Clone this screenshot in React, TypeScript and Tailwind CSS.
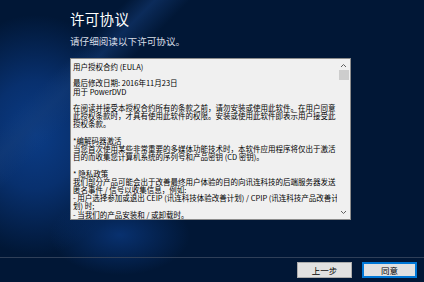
import React from "react";

const lines: string[] = [
  "用户授权合约 (EULA)",
  "",
  "最后修改日期: 2016年11月23日",
  "用于 PowerDVD",
  "",
  "在阅读并接受本授权合约所有的条款之前，请勿安装或使用此软件。在用户同意",
  "此授权条款时，才具有使用此软件的权限。安装或使用此软件即表示用户接受此",
  "授权条款。",
  "",
  "*编解码器激活",
  "当您首次使用某些非常重要的多媒体功能技术时，本软件应用程序将仅出于激活",
  "目的而收集您计算机系统的序列号和产品密钥 (CD 密钥)。",
  "",
  "* 隐私政策",
  "我们部分产品可能会出于改善最终用户体验的目的向讯连科技的后端服务器发送",
  "匿名事件 / 信号以收集信息，例如:",
  "- 用户选择参加或退出 CEIP (讯连科技体验改善计划) / CPIP (讯连科技产品改善计",
  "划) 时;",
  "- 当我们的产品安装和 / 或卸载时。",
];

export default function App() {
  return (
    <div
      className="relative w-[424px] h-[282px] overflow-hidden bg-[#011736] flex flex-col"
      style={{ fontFamily: '"Noto Sans CJK SC", "Noto Sans", sans-serif' }}
    >
      {/* background artwork */}
      <div className="absolute inset-0 pointer-events-none bg-[radial-gradient(ellipse_100px_120px_at_35px_135px,#0b3c86_0%,#08306e_45%,rgba(1,23,54,0)_100%)]" />
      <div className="absolute inset-0 pointer-events-none bg-[radial-gradient(ellipse_70px_40px_at_120px_235px,rgba(10,55,125,0.8)_0%,rgba(1,23,54,0)_100%)]" />
      <div className="absolute inset-0 pointer-events-none bg-[linear-gradient(135deg,rgba(1,23,54,0)_0%,rgba(1,23,54,0)_18%,rgba(20,60,120,0.55)_22%,rgba(1,23,54,0)_27%,rgba(1,23,54,0)_100%)]" />

      <div className="relative flex flex-col pl-[70px] pt-[10px]">
        <div className="text-white text-[14.5px] leading-[18px] tracking-[0.3px]">许可协议</div>
        <div className="text-[#d8dde6] text-[9.6px] leading-[12px] mt-[7px]">请仔细阅读以下许可协议。</div>

        <div className="mt-[11px] w-[281px] h-[162px] border border-[#8c8c8c] bg-[#f0f0f0] flex">
          <div className="flex-1 pl-[2px] pt-[4px] overflow-hidden text-[7.5px] leading-[8.2px] text-black">
            {lines.map((l, i) =>
              l === "" ? (
                <div key={i} className="h-[8.2px]" />
              ) : (
                <div key={i} className="whitespace-nowrap">
                  {l}
                </div>
              )
            )}
          </div>
          <div className="w-[13px] flex flex-col items-center bg-[#f0f0f0]">
            <svg width="7" height="5" viewBox="0 0 7 5" className="mt-[4px]">
              <path d="M1 4 L3.5 1.5 L6 4" fill="none" stroke="#606060" strokeWidth="1" />
            </svg>
            <div className="mt-[2px] w-[10px] h-[10px] bg-[#cdcdcd]" />
            <div className="flex-1" />
            <svg width="7" height="5" viewBox="0 0 7 5" className="mb-[4px]">
              <path d="M1 1 L3.5 3.5 L6 1" fill="none" stroke="#606060" strokeWidth="1" />
            </svg>
          </div>
        </div>
      </div>

      <div className="relative mt-[37px] h-px bg-[#2f3f58]" />

      <div className="relative flex justify-end gap-[10px] pr-[7px] mt-[4px]">
        <div className="w-[55px] h-[16px] bg-[#e1e1e1] border border-[#adadad] flex items-center justify-center text-[8.5px] text-black">
          上一步
        </div>
        <div className="w-[55px] h-[16px] bg-[#e1e1e1] border-2 border-[#0078d7] flex items-center justify-center text-[8.5px] text-black">
          同意
        </div>
      </div>
    </div>
  );
}
